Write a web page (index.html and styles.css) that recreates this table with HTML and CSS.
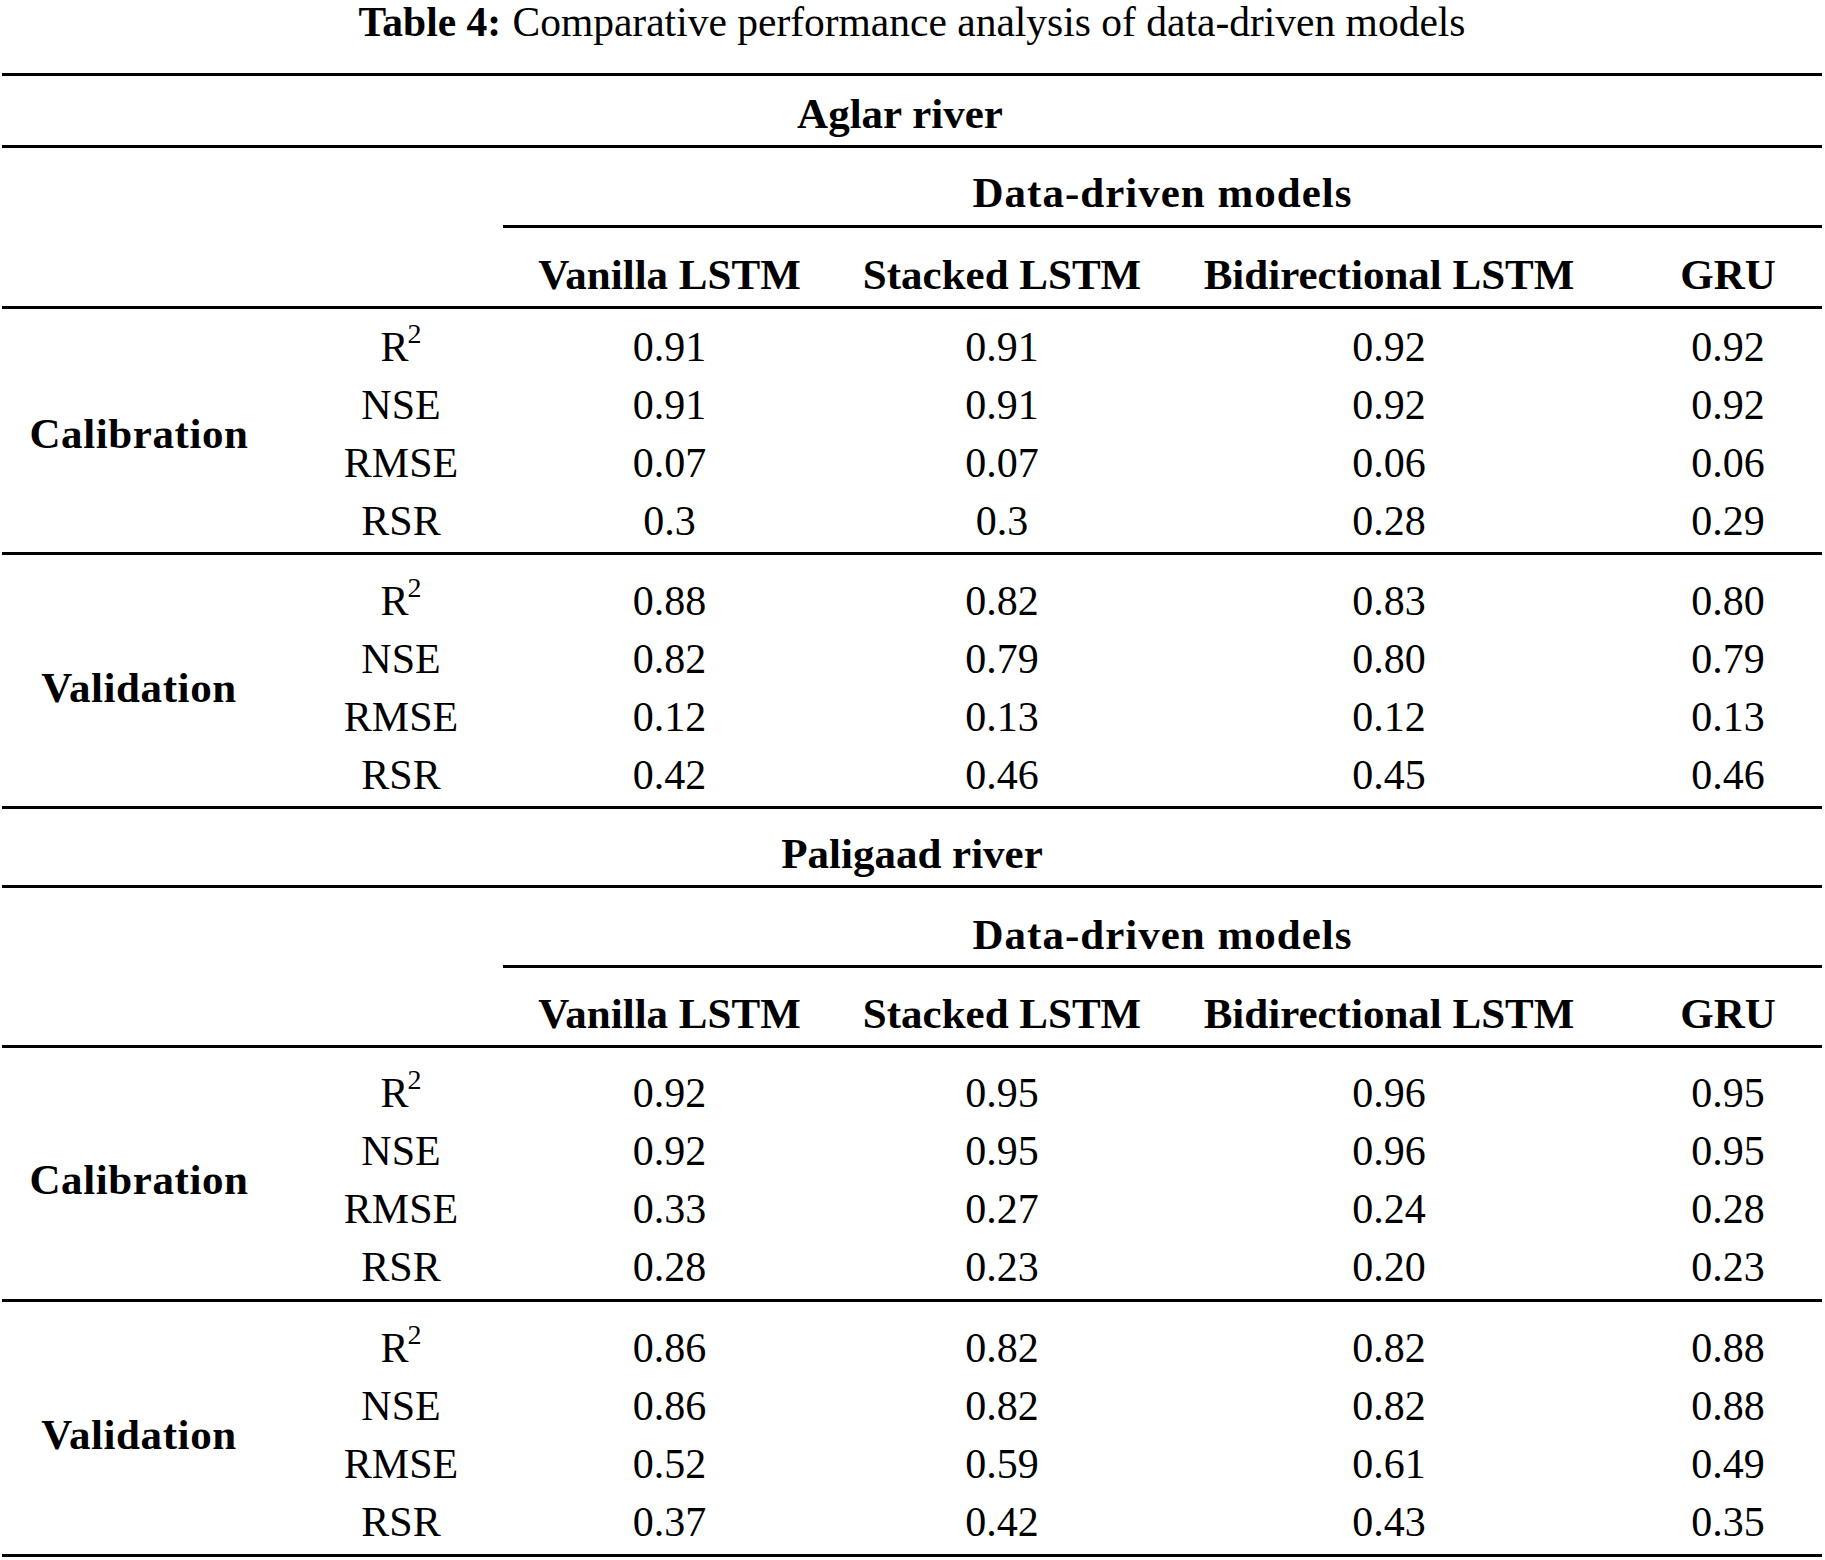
FILE: index.html
```html
<!DOCTYPE html>
<html lang="en">
<head>
<meta charset="utf-8">
<title>Table 4</title>
<link rel="stylesheet" href="styles.css">
</head>
<body>
<div class="page">
  <p class="caption"><b class="cap-label">Table 4:</b> Comparative performance analysis of data-driven models</p>
  <div class="tbl">
    <div class="river river-a">Aglar river</div>
    <div class="cols ddm-row ddm-a"><div class="ddm">Data-driven models</div></div>
    <div class="cols hdr hdr-a">
      <div class="c1"></div><div class="c2"></div>
      <div class="c3">Vanilla LSTM</div><div class="c4">Stacked LSTM</div><div class="c5">Bidirectional LSTM</div><div class="c6">GRU</div>
    </div>
    <div class="cols block blk-1">
      <div class="grp">Calibration</div>
      <div class="c2">R<sup class="sq">2</sup></div><div class="c3">0.91</div><div class="c4">0.91</div><div class="c5">0.92</div><div class="c6">0.92</div>
      <div class="c2">NSE</div><div class="c3">0.91</div><div class="c4">0.91</div><div class="c5">0.92</div><div class="c6">0.92</div>
      <div class="c2">RMSE</div><div class="c3">0.07</div><div class="c4">0.07</div><div class="c5">0.06</div><div class="c6">0.06</div>
      <div class="c2">RSR</div><div class="c3">0.3</div><div class="c4">0.3</div><div class="c5">0.28</div><div class="c6">0.29</div>
    </div>
    <div class="cols block blk-2">
      <div class="grp">Validation</div>
      <div class="c2">R<sup class="sq">2</sup></div><div class="c3">0.88</div><div class="c4">0.82</div><div class="c5">0.83</div><div class="c6">0.80</div>
      <div class="c2">NSE</div><div class="c3">0.82</div><div class="c4">0.79</div><div class="c5">0.80</div><div class="c6">0.79</div>
      <div class="c2">RMSE</div><div class="c3">0.12</div><div class="c4">0.13</div><div class="c5">0.12</div><div class="c6">0.13</div>
      <div class="c2">RSR</div><div class="c3">0.42</div><div class="c4">0.46</div><div class="c5">0.45</div><div class="c6">0.46</div>
    </div>
    <div class="river river-b">Paligaad river</div>
    <div class="cols ddm-row ddm-b"><div class="ddm">Data-driven models</div></div>
    <div class="cols hdr hdr-b">
      <div class="c1"></div><div class="c2"></div>
      <div class="c3">Vanilla LSTM</div><div class="c4">Stacked LSTM</div><div class="c5">Bidirectional LSTM</div><div class="c6">GRU</div>
    </div>
    <div class="cols block blk-3">
      <div class="grp">Calibration</div>
      <div class="c2">R<sup class="sq">2</sup></div><div class="c3">0.92</div><div class="c4">0.95</div><div class="c5">0.96</div><div class="c6">0.95</div>
      <div class="c2">NSE</div><div class="c3">0.92</div><div class="c4">0.95</div><div class="c5">0.96</div><div class="c6">0.95</div>
      <div class="c2">RMSE</div><div class="c3">0.33</div><div class="c4">0.27</div><div class="c5">0.24</div><div class="c6">0.28</div>
      <div class="c2">RSR</div><div class="c3">0.28</div><div class="c4">0.23</div><div class="c5">0.20</div><div class="c6">0.23</div>
    </div>
    <div class="cols block blk-4">
      <div class="grp">Validation</div>
      <div class="c2">R<sup class="sq">2</sup></div><div class="c3">0.86</div><div class="c4">0.82</div><div class="c5">0.82</div><div class="c6">0.88</div>
      <div class="c2">NSE</div><div class="c3">0.86</div><div class="c4">0.82</div><div class="c5">0.82</div><div class="c6">0.88</div>
      <div class="c2">RMSE</div><div class="c3">0.52</div><div class="c4">0.59</div><div class="c5">0.61</div><div class="c6">0.49</div>
      <div class="c2">RSR</div><div class="c3">0.37</div><div class="c4">0.42</div><div class="c5">0.43</div><div class="c6">0.35</div>
    </div>
  </div>
</div>
</body>
</html>
```
FILE: styles.css
```css
html, body {
  margin: 0;
  padding: 0;
  background: #ffffff;
}

body {
  font-family: "Liberation Serif", "Times New Roman", serif;
  color: #000000;
  width: 1825px;
}

.page {
  padding: 0 3px 0 2px;
}

.caption {
  margin: 0 0 29px 0;
  font-size: 41.5px;
  line-height: 44px;
  text-align: center;
  white-space: nowrap;
}

.cap-label {
  font-weight: 700;
  margin-right: 1px;
}

.tbl {
  width: 1820px;
  border-top: 3px solid #000;
  white-space: nowrap;
}

.cols {
  display: grid;
  grid-template-columns: 268px 233px 333px 360px 363px 263px;
}

.river {
  font-weight: 700;
  font-size: 43px;
  line-height: 58px;
  text-align: center;
  border-bottom: 3px solid #000;
}

.river-a {
  padding: 9px 24px 2px 0;
}

.river-b {
  padding: 16px 0 2px 0;
}

.ddm-row .ddm {
  grid-column: 3 / 7;
  font-weight: 700;
  font-size: 43px;
  line-height: 58px;
  letter-spacing: 1px;
  text-align: center;
  border-bottom: 3px solid #000;
}

.ddm-a .ddm {
  padding: 16px 0 3px 0;
}

.ddm-b .ddm {
  padding: 18px 0 1px 0;
}

.hdr {
  font-weight: 700;
  font-size: 43px;
  line-height: 58px;
  text-align: center;
  border-bottom: 3px solid #000;
}

.hdr .c5 {
  display: flex;
  justify-content: center;
}

.hdr-a {
  padding: 18px 0 2px 0;
}

.hdr-b {
  padding: 17px 0 2px 0;
}

.block {
  font-size: 42px;
  line-height: 58px;
  text-align: center;
  grid-auto-rows: 58px;
  border-bottom: 3px solid #000;
}

.blk-1 { padding: 9px 0 2px 0; }
.blk-2 { padding: 17px 0 2px 0; }
.blk-3 { padding: 16px 0 3px 0; }
.blk-4 { padding: 17px 0 3px 0; }

.grp {
  grid-column: 1;
  grid-row: 1 / span 4;
  align-self: center;
  font-weight: 700;
  font-size: 43px;
  letter-spacing: 0.6px;
  padding-left: 6px;
}

.c1 { padding-left: 6px; }
.c2 { padding-left: 29px; }
.c4 { padding-right: 28px; }
.c5 { padding-left: 23px; }
.c6 { padding-left: 75px; }

.sq {
  font-size: 28px;
  line-height: 0;
  vertical-align: baseline;
  position: relative;
  top: -18px;
  margin-left: -1px;
}
```
